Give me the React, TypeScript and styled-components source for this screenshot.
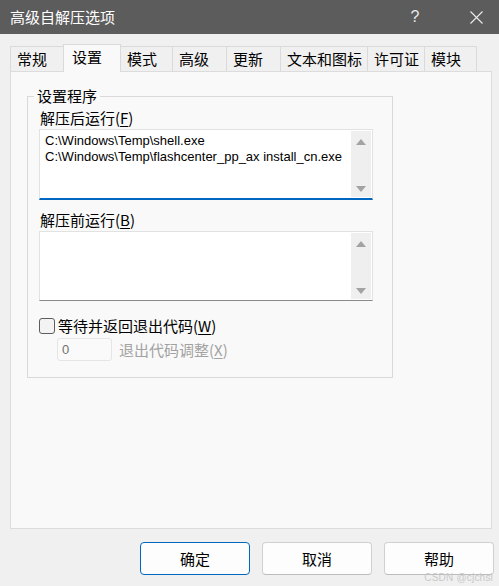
import React from 'react';
import styled, { createGlobalStyle } from 'styled-components';

const GlobalStyle = createGlobalStyle`
  html, body {
    margin: 0;
    padding: 0;
    background: #f0f0f0;
  }
  * {
    box-sizing: border-box;
  }
`;

const UI_FONT = `'Noto Sans CJK SC', 'Noto Sans', sans-serif`;

const Window = styled.div`
  position: relative;
  width: 499px;
  height: 586px;
  overflow: hidden;
  background: #f0f0f0;
  font-family: ${UI_FONT};
  font-size: 15px;
  color: #000;
  display: flex;
  flex-direction: column;
`;

const TitleBar = styled.div`
  height: 34px;
  flex: none;
  background: #5c5c5c;
  color: #ffffff;
  display: flex;
  align-items: center;
  padding-left: 10px;
  .title {
    flex: 1;
    font-size: 15px;
    line-height: 18px;
    margin-top: -1px;
  }
`;

const CaptionButton = styled.div<{ $w: number }>`
  width: ${(p) => p.$w}px;
  height: 34px;
  display: flex;
  align-items: center;
  justify-content: center;
  color: #e8e8e8;
  font-family: 'Liberation Sans', sans-serif;
  font-size: 16px;
`;

const Body = styled.div`
  flex: 1;
  display: flex;
  flex-direction: column;
  padding: 10px 7px 0 10px;
`;

const TabStrip = styled.div`
  display: flex;
  align-items: flex-end;
  height: 28px;
  margin-bottom: -1px;
`;

const Tab = styled.div<{ $active?: boolean; $w: number }>`
  position: relative;
  z-index: ${(p) => (p.$active ? 2 : 0)};
  width: ${(p) => p.$w}px;
  height: ${(p) => (p.$active ? 28 : 26)}px;
  padding-left: ${(p) => (p.$active ? 8 : 6)}px;
  padding-top: 3px;
  line-height: 18px;
  white-space: nowrap;
  background: ${(p) => (p.$active ? '#f9f9f9' : '#f0f0f0')};
  border: 1px solid #dadada;
  border-bottom: ${(p) => (p.$active ? 'none' : '1px solid #dadada')};
  margin-left: -1px;
  &:first-child {
    margin-left: 0;
  }
`;

const Panel = styled.div`
  position: relative;
  z-index: 1;
  height: 458px;
  background: #f9f9f9;
  border: 1px solid #dcdcdc;
  padding: 15px 0 0 16px;
`;

const Group = styled.fieldset`
  width: 366px;
  margin: 0;
  padding: 0 0 16px 11px;
  border: 1px solid #d9d9d9;
  min-width: 0;
`;

const Legend = styled.legend`
  margin-left: -5px;
  padding: 0 3px;
  line-height: 18px;
  font-size: 15px;
`;

const FieldLabel = styled.div<{ $gap: number }>`
  margin-top: ${(p) => p.$gap}px;
  padding-left: 1px;
  line-height: 18px;
  height: 18px;
  u {
    text-underline-offset: 2px;
  }
`;

const EditBox = styled.div<{ $focused?: boolean; $h: number }>`
  margin-top: 2px;
  width: 334px;
  height: ${(p) => p.$h}px;
  background: #ffffff;
  border: 1px solid #e2e2e2;
  border-bottom: ${(p) => (p.$focused ? '2px solid #0067c0' : '1px solid #8a8a8a')};
  display: flex;
`;

const EditText = styled.div`
  flex: 1;
  padding: 3px 0 0 5px;
  font-family: 'Liberation Sans', Arial, sans-serif;
  font-size: 13px;
  line-height: 16px;
  color: #000;
  white-space: pre;
  overflow: hidden;
`;

const ScrollBar = styled.div`
  width: 20px;
  margin: 1px 1px 1px 0;
  background: #efefef;
  display: flex;
  flex-direction: column;
  justify-content: space-between;
  align-items: center;
  padding: 8px 0 5px;
`;

const Arrow = styled.div<{ $down?: boolean }>`
  width: 0;
  height: 0;
  border-left: 5px solid transparent;
  border-right: 5px solid transparent;
  ${(p) =>
    p.$down
      ? 'border-top: 6px solid #a3a3a3;'
      : 'border-bottom: 6px solid #a3a3a3;'}
`;

const CheckRow = styled.div`
  margin-top: 16px;
  display: flex;
  align-items: center;
  gap: 3px;
  height: 18px;
  line-height: 18px;
  u {
    text-underline-offset: 2px;
  }
`;

const CheckBox = styled.div`
  width: 16px;
  height: 16px;
  border: 1px solid #5d5d5d;
  border-radius: 3px;
  background: #f3f3f3;
  flex: none;
`;

const SubRow = styled.div`
  margin-top: 3px;
  margin-left: 18px;
  display: flex;
  align-items: center;
  gap: 7px;
  color: #a2a2a2;
  line-height: 18px;
  u {
    text-underline-offset: 2px;
  }
`;

const NumberField = styled.div`
  width: 55px;
  height: 23px;
  border: 1px solid #e5e5e5;
  border-radius: 3px;
  background: #fafafa;
  color: #707070;
  font-family: 'Liberation Sans', Arial, sans-serif;
  font-size: 13px;
  line-height: 21px;
  padding-left: 4px;
`;

const ButtonRow = styled.div`
  margin-top: 13px;
  margin-right: -2px;
  display: flex;
  justify-content: flex-end;
  gap: 12px;
`;

const DialogButton = styled.div<{ $default?: boolean }>`
  width: 110px;
  height: 33px;
  border-radius: 4px;
  background: #fdfdfd;
  border: 1px solid ${(p) => (p.$default ? '#0067c0' : '#d0d0d0')};
  border-bottom-color: ${(p) => (p.$default ? '#0067c0' : '#bcbcbc')};
  display: flex;
  align-items: center;
  justify-content: center;
  font-size: 15px;
`;

const Watermark = styled.div`
  position: absolute;
  right: 6px;
  bottom: 3px;
  font-family: 'Liberation Sans', Arial, sans-serif;
  font-size: 10px;
  color: #c9c9c9;
  letter-spacing: 0.2px;
`;

const tabs = [
  { label: '常规', w: 54 },
  { label: '设置', w: 58, active: true },
  { label: '模式', w: 53 },
  { label: '高级', w: 55 },
  { label: '更新', w: 55 },
  { label: '文本和图标', w: 88 },
  { label: '许可证', w: 58 },
  { label: '模块', w: 53 },
];

const App = () => {
  return (
    <Window>
      <GlobalStyle />
      <TitleBar>
        <span className={'title'}>高级自解压选项</span>
        <CaptionButton $w={40}>?</CaptionButton>
        <CaptionButton $w={18} />
        <CaptionButton $w={46}>
          <svg width="13" height="13" viewBox="0 0 13 13">
            <path d="M0.5 0.5 L12.5 12.5 M12.5 0.5 L0.5 12.5" stroke="#ececec" strokeWidth="1.1" />
          </svg>
        </CaptionButton>
      </TitleBar>
      <Body>
        <TabStrip>
          {tabs.map((t) => (
            <Tab key={t.label} $w={t.w} $active={t.active}>
              {t.label}
            </Tab>
          ))}
        </TabStrip>
        <Panel>
          <Group>
            <Legend>设置程序</Legend>
            <FieldLabel $gap={4}>
              解压后运行(<u>F</u>)
            </FieldLabel>
            <EditBox $focused $h={71}>
              <EditText>
                {'C:\\Windows\\Temp\\shell.exe\nC:\\Windows\\Temp\\flashcenter_pp_ax install_cn.exe'}
              </EditText>
              <ScrollBar>
                <Arrow />
                <Arrow $down />
              </ScrollBar>
            </EditBox>
            <FieldLabel $gap={11}>
              解压前运行(<u>B</u>)
            </FieldLabel>
            <EditBox $h={70}>
              <EditText />
              <ScrollBar>
                <Arrow />
                <Arrow $down />
              </ScrollBar>
            </EditBox>
            <CheckRow>
              <CheckBox />
              <span>
                等待并返回退出代码(<u>W</u>)
              </span>
            </CheckRow>
            <SubRow>
              <NumberField>0</NumberField>
              <span>
                退出代码调整(<u>X</u>)
              </span>
            </SubRow>
          </Group>
        </Panel>
        <ButtonRow>
          <DialogButton $default>确定</DialogButton>
          <DialogButton>取消</DialogButton>
          <DialogButton>帮助</DialogButton>
        </ButtonRow>
      </Body>
      <Watermark>CSDN @cjchsi</Watermark>
    </Window>
  );
};

export default App;
